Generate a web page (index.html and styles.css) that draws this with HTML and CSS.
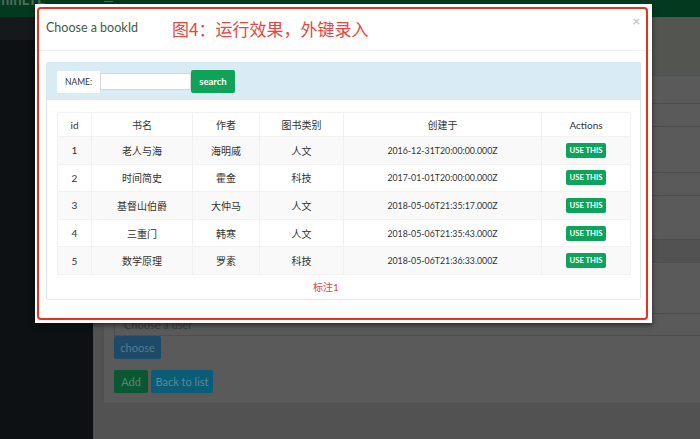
FILE: index.html
```html
<!DOCTYPE html>
<html lang="zh-CN">
<head>
<meta charset="utf-8">
<title>Choose a bookId</title>
<link rel="stylesheet" href="styles.css">
</head>
<body>
<div class="app">
  <header class="topbar">
    <div class="logo"><span class="logo-text">AdminLTE</span></div>
    <div class="toggle">
      <svg width="9" height="5" viewBox="0 0 9 5"><rect x="0" y="0" width="9" height="1" fill="#4f6f5c"/><rect x="0" y="3" width="9" height="1" fill="#4f6f5c"/></svg>
    </div>
  </header>
  <div class="layout">
    <aside class="sidebar">
      <div class="sidebar-form"></div>
      <div class="sidebar-item"><span class="sidebar-glyph">c</span></div>
    </aside>
    <main class="main">
      <div class="content-header"></div>
      <section class="box">
        <div class="form-group g1"><div class="lbl"></div><div class="input"></div></div>
        <div class="form-group g2"><div class="lbl"></div><div class="input"></div></div>
        <div class="form-group g3"><div class="lbl"></div><div class="input input-readonly"></div></div>
        <div class="form-group g4"><div class="lbl"></div><div class="input input-short">Choose a user</div></div>
        <div class="choose-row"><button class="btn btn-choose">choose</button></div>
        <div class="actions"><button class="btn btn-add">Add</button><button class="btn btn-back">Back to list</button></div>
      </section>
    </main>
  </div>

  <div class="modal">
    <div class="modal-header">
      <h4 class="modal-title">Choose a bookId</h4>
      <span class="annot-title">图4：运行效果，外键录入</span>
      <span class="close">×</span>
    </div>
    <div class="modal-body">
      <div class="panel">
        <div class="panel-heading">
          <div class="search-form">
            <span class="search-label">NAME:</span>
            <span class="search-input"></span>
            <button class="btn-search">search</button>
          </div>
        </div>
        <div class="panel-body">
          <table class="books">
            <colgroup>
              <col class="c-id"><col class="c-name"><col class="c-author"><col class="c-cat"><col class="c-date"><col class="c-act">
            </colgroup>
            <thead>
              <tr><th>id</th><th>书名</th><th>作者</th><th>图书类别</th><th>创建于</th><th>Actions</th></tr>
            </thead>
            <tbody>
              <tr><td>1</td><td>老人与海</td><td>海明威</td><td>人文</td><td class="date">2016-12-31T20:00:00.000Z</td><td><span class="use-btn">USE THIS</span></td></tr>
              <tr><td>2</td><td>时间简史</td><td>霍金</td><td>科技</td><td class="date">2017-01-01T20:00:00.000Z</td><td><span class="use-btn">USE THIS</span></td></tr>
              <tr><td>3</td><td>基督山伯爵</td><td>大仲马</td><td>人文</td><td class="date">2018-05-06T21:35:17.000Z</td><td><span class="use-btn">USE THIS</span></td></tr>
              <tr><td>4</td><td>三重门</td><td>韩寒</td><td>人文</td><td class="date">2018-05-06T21:35:43.000Z</td><td><span class="use-btn">USE THIS</span></td></tr>
              <tr><td>5</td><td>数学原理</td><td>罗素</td><td>科技</td><td class="date">2018-05-06T21:36:33.000Z</td><td><span class="use-btn">USE THIS</span></td></tr>
            </tbody>
          </table>
          <div class="annot-note">标注1</div>
        </div>
      </div>
    </div>
    <div class="annot-frame"></div>
  </div>
</div>
</body>
</html>
```

FILE: styles.css
```css
* { box-sizing: border-box; }

html, body {
  margin: 0;
  padding: 0;
}

body {
  width: 700px;
  height: 439px;
  overflow: hidden;
  font-family: Lato, "Noto Sans CJK SC", sans-serif;
  background: #525252;
}

.app {
  position: relative;
  width: 700px;
  height: 439px;
  display: flex;
  flex-direction: column;
}

/* ---------- dimmed page behind the modal ---------- */
.topbar {
  height: 17px;
  flex: none;
  background: #033a1f;
  display: flex;
  overflow: hidden;
}

.logo {
  width: 93px;
  flex: none;
  overflow: hidden;
}

.logo-text {
  display: block;
  margin-top: -9px;
  margin-left: -22px;
  font-size: 15px;
  line-height: 17px;
  font-weight: 700;
  color: #4d6c59;
  white-space: nowrap;
}

.toggle {
  margin-left: 11px;
  line-height: 0;
}

.layout {
  flex: 1;
  display: flex;
}

.sidebar {
  width: 93px;
  flex: none;
  background: #0e1113;
}

.sidebar-form {
  height: 23px;
  background: #15191b;
}

.sidebar-item {
  height: 20px;
  margin-top: 42px;
  overflow: hidden;
}

.sidebar-glyph {
  display: block;
  margin-left: -5px;
  font-size: 10px;
  color: #4a4f52;
}

.main {
  flex: 1;
  display: flex;
  flex-direction: column;
  background: #525252;
}

.content-header {
  height: 58px;
  background: #535550;
}

.box {
  margin-left: 10px;
  background: #5a5a5a;
  border-top: 1px solid #505050;
  border-left: 1px solid #505050;
  border-bottom: 1px solid #4e4e4e;
  padding: 9px 0 10px 10px;
}

.lbl {
  height: 18px;
}

.input {
  height: 24px;
  border: 1px solid #4e4e4e;
  border-right: none;
  background: #5a5a5a;
  font-size: 11px;
  line-height: 22px;
  padding-left: 9px;
  color: #3c3c3c;
}

.input-readonly { background: #525252; }
.input-short { height: 23px; }

.g1 { margin-bottom: 27px; }
.g2 { margin-bottom: 25px; }
.g3 { margin-bottom: 32px; }

.choose-row { height: 23px; }

.actions {
  margin-top: 11px;
  display: flex;
  gap: 3px;
}

.btn {
  border: none;
  border-radius: 2px;
  height: 23px;
  padding: 0;
  font-family: Lato, sans-serif;
  font-size: 11px;
  line-height: 23px;
}

.btn-choose { width: 47px; background: #1d4a68; color: #587b90; }
.btn-add { width: 34px; background: #0a5733; color: #58876d; }
.btn-back { width: 62px; background: #0b5c77; color: #588a9d; }

/* ---------- modal ---------- */
.modal {
  position: absolute;
  left: 35px;
  top: 4px;
  width: 617px;
  height: 319px;
  background: #fff;
  box-shadow: 0 2px 5px rgba(0, 0, 0, 0.55);
}

.annot-frame {
  position: absolute;
  left: 2px;
  top: 3px;
  width: 611px;
  height: 313px;
  border: 2px solid #e8311d;
  border-radius: 4px;
  pointer-events: none;
}

.modal-header {
  height: 47px;
  padding: 0 11px;
  display: flex;
  align-items: center;
  border-bottom: 1px solid #f2f2f2;
}

.modal-title {
  margin: 0;
  font-size: 12.5px;
  font-weight: 400;
  color: #3f5c45;
}

.annot-title {
  margin-left: 34px;
  margin-top: 2px;
  font-family: "Noto Sans CJK SC", sans-serif;
  font-size: 17px;
  color: #e8463c;
}

.close {
  margin-left: auto;
  align-self: flex-start;
  margin-top: 12px;
  margin-right: 1px;
  font-size: 13px;
  line-height: 10px;
  font-weight: 700;
  color: #c6c6c6;
}

.modal-body {
  padding: 11px 11px 24px;
}

.panel {
  border: 1px solid #d8e9f1;
  border-radius: 2px;
}

.panel-heading {
  background: #d9ebf5;
  padding: 7px 10px;
}

.search-form {
  display: flex;
  align-items: center;
  height: 23px;
}

.search-label {
  width: 43px;
  height: 22px;
  background: #fff;
  font-size: 8.5px;
  line-height: 22px;
  text-align: center;
  color: #333;
}

.search-input {
  width: 91px;
  height: 17px;
  background: #fff;
  border: 1px solid #d6d6d6;
}

.btn-search {
  width: 44px;
  height: 23px;
  border: none;
  border-radius: 2px;
  background: #0fa35a;
  color: #fff;
  font-family: Lato, sans-serif;
  font-size: 9.5px;
  font-weight: 700;
  padding: 0;
}

.panel-body {
  padding: 12px 10px 0;
}

.books {
  width: 573px;
  border-collapse: collapse;
  table-layout: fixed;
  border: 1px solid #f2f2f2;
  font-size: 10px;
  color: #333;
}

.c-id { width: 34px; }
.c-name { width: 101px; }
.c-author { width: 67px; }
.c-cat { width: 84px; }
.c-date { width: 198px; }
.c-act { width: 89px; }

.books th,
.books td {
  border-left: 1px solid #f0f0f0;
  border-top: 1px solid #f2f2f2;
  text-align: center;
  padding: 0;
  font-weight: 400;
}

.books th { height: 24px; }
.books td { height: 27.6px; }

.books tbody tr:nth-child(odd) { background: #f9f9f9; }

.books .date { font-size: 8.8px; }

.use-btn {
  display: inline-block;
  width: 40px;
  height: 15px;
  border-radius: 2px;
  background: #0da35a;
  color: #fff;
  font-size: 7.7px;
  font-weight: 700;
  line-height: 15px;
  vertical-align: middle;
}

.annot-note {
  height: 24px;
  padding-left: 256px;
  font-size: 10px;
  line-height: 24px;
  color: #e8463c;
}
```
